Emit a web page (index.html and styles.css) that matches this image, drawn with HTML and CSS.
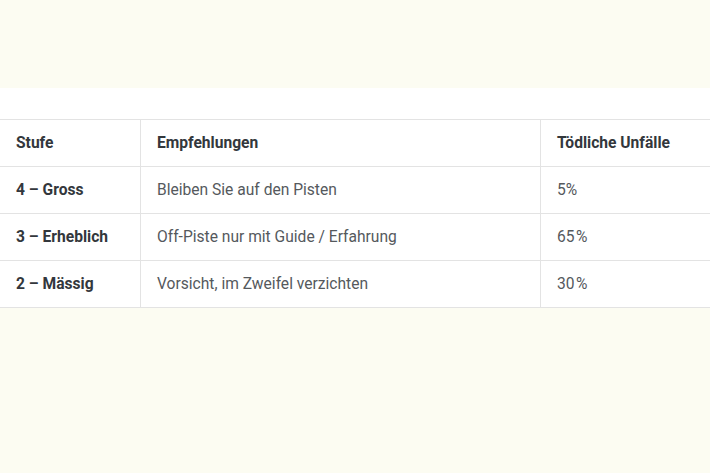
FILE: index.html
```html
<!DOCTYPE html>
<html lang="de">
<head>
<meta charset="utf-8">
<title>Lawinengefahr</title>
<link rel="stylesheet" href="styles.css">
</head>
<body>
<div class="top"></div>
<section class="panel">
  <table class="risk">
    <thead>
      <tr>
        <th class="c1">Stufe</th>
        <th class="c2">Empfehlungen</th>
        <th class="c3">Tödliche Unfälle</th>
      </tr>
    </thead>
    <tbody>
      <tr>
        <td class="lvl">4 – Gross</td>
        <td>Bleiben Sie auf den Pisten</td>
        <td>5%</td>
      </tr>
      <tr>
        <td class="lvl">3 – Erheblich</td>
        <td>Off-Piste nur mit Guide / Erfahrung</td>
        <td>65&#8202;%</td>
      </tr>
      <tr>
        <td class="lvl">2 – Mässig</td>
        <td>Vorsicht, im Zweifel verzichten</td>
        <td>30&#8202;%</td>
      </tr>
    </tbody>
  </table>
</section>
</body>
</html>
```

FILE: styles.css
```css
html, body {
  margin: 0;
  padding: 0;
}
body {
  background: #fcfcf2;
  font-family: Roboto, "Liberation Sans", Arial, sans-serif;
  font-size: 15.6px;
  overflow: hidden;
}
.top {
  height: 88px;
}
.panel {
  background: #ffffff;
  padding-top: 31px;
  overflow: hidden;
}
.risk {
  border-collapse: collapse;
  table-layout: fixed;
  width: 711px;
  margin-left: -1px;
}
.risk th,
.risk td {
  border: 1px solid #e3e3e3;
  height: 47px;
  padding: 0 0 0 16px;
  text-align: left;
  vertical-align: middle;
  box-sizing: border-box;
}
.risk th {
  font-weight: 700;
  color: #33373c;
}
.risk td {
  color: #55595d;
}
.risk td.lvl {
  font-weight: 700;
  color: #33373c;
}
.c1 { width: 141px; }
.c2 { width: 400px; }
.c3 { width: 170px; }
```
